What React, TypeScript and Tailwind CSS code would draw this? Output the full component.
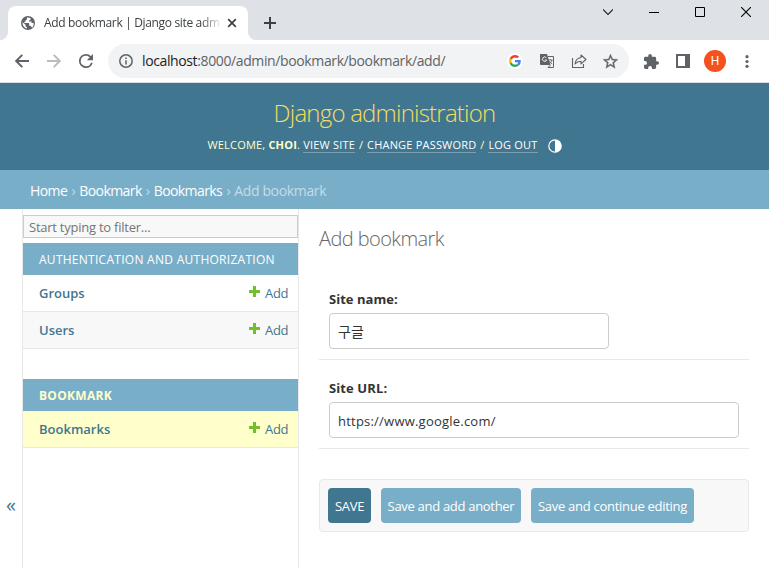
import React from "react";

const TabBar = () => (
  <div className="flex h-10 bg-[#dee1e6]">
    <div className="flex w-2 items-end">
      <svg width="8" height="8" viewBox="0 0 8 8"><path d="M8 0A8 8 0 0 1 0 8H8Z" fill="#fff" /></svg>
    </div>
    <div className="mt-1.5 flex w-60 items-center rounded-t-lg bg-white pl-[13px] text-[#3c4043]">
      <svg className="shrink-0" width="14" height="14" viewBox="2 2 20 20">
        <circle cx="12" cy="12" r="10" fill="#5f6368" />
        <path d="M4.2 11l4.3 3.6v1.2c0 1 .8 1.8 1.9 1.8v2.3A8 8 0 0 1 4.2 11Zm6.3-6.8v2.2c0 1-.9 1.7-2 1.7v2H6.700v2h6c.6 0 1 .4 1 1v2.800h1c.9 0 1.600.6 1.900 1.400l2 1A8 8 0 0 0 20 12h-3v-2h-3.500V8h2V5a8 8 0 0 0-5-.8Z" fill="#fff" />
      </svg>
      <span className="ml-[9px] w-[176px] whitespace-nowrap text-[12px] leading-5 tracking-[-0.34px] [mask-image:linear-gradient(to_right,black_157px,transparent_178px)]">
        Add bookmark | Django site adm
      </span>
      <svg className="ml-[7px] shrink-0" width="10" height="10" viewBox="0 0 10 10"><path d="M1.200 1.200l7.600 7.600M8.800 1.200L1.200 8.800" stroke="#3c4043" strokeWidth="1.700" /></svg>
    </div>
    <div className="flex w-2 items-end">
      <svg width="8" height="8" viewBox="0 0 8 8"><path d="M0 0A8 8 0 0 0 8 8H0Z" fill="#fff" /></svg>
    </div>
    <svg className="ml-[8px] mt-[17px]" width="12" height="12" viewBox="0 0 12 12"><path d="M6 0v12M0 6h12" stroke="#3c4043" strokeWidth="2" /></svg>
    <div className="ml-auto flex gap-9 pr-[18px] pt-[7px]">
      <svg width="10" height="10" viewBox="0 0 10 10"><path d="M0 2.500l5 5 5-5" fill="none" stroke="#222" strokeWidth="1.100" /></svg>
      <svg width="10" height="10" viewBox="0 0 10 10"><path d="M0 5.500h10" stroke="#000" /></svg>
      <svg width="10" height="10" viewBox="0 0 10 10"><path d="M.5.5h9v9h-9z" fill="none" stroke="#000" /></svg>
      <svg width="10" height="10" viewBox="0 0 10 10"><path d="M0 0l10 10M10 0L0 10" stroke="#000" strokeWidth="1.100" /></svg>
    </div>
  </div>
);

const GoogleG = () => (
  <span className="flex size-4 items-center justify-center rounded-full bg-white">
    <svg width="12" height="12" viewBox="0 0 48 48">
      <path fill="#EA4335" d="M24 9.500c3.540 0 6.710 1.220 9.210 3.600l6.850-6.850C35.900 2.380 30.470 0 24 0 14.620 0 6.510 5.380 2.560 13.220l7.980 6.190C12.430 13.720 17.740 9.500 24 9.500z" />
      <path fill="#4285F4" d="M46.980 24.550c0-1.570-.15-3.090-.38-4.550H24v9.020h12.940c-.58 2.960-2.260 5.480-4.780 7.180l7.730 6c4.510-4.180 7.090-10.360 7.090-17.650z" />
      <path fill="#FBBC05" d="M10.530 28.590A14.500 14.500 0 0 1 9.770 24c0-1.600.27-3.140.76-4.590l-7.980-6.190A23.900 23.900 0 0 0 0 24c0 3.880.92 7.540 2.560 10.780l7.970-6.190z" />
      <path fill="#34A853" d="M24 48c6.480 0 11.930-2.130 15.890-5.810l-7.730-6c-2.150 1.450-4.920 2.300-8.160 2.300-6.260 0-11.570-4.220-13.470-9.910l-7.980 6.190C6.510 42.620 14.620 48 24 48z" />
    </svg>
  </span>
);

const Toolbar = () => (
  <div className="flex h-[43px] items-center border-b border-[#dadce0] bg-white pl-[15px]">
    <svg width="14" height="14" viewBox="0 0 14 14"><path d="M14 7H1.500M7.300.8L1.200 7l6.100 6.200" fill="none" stroke="#5f6368" strokeWidth="1.900" /></svg>
    <svg className="ml-[18px]" width="14" height="14" viewBox="0 0 14 14"><path d="M0 7h12.500M6.700.8L12.800 7l-6.100 6.200" fill="none" stroke="#babcbe" strokeWidth="1.900" /></svg>
    <svg className="ml-[18px]" width="14" height="14" viewBox="4 4 16 16"><path fill="#5f6368" d="M17.650 6.350A7.960 7.960 0 0 0 12 4a8 8 0 1 0 7.730 10h-2.080A6 6 0 1 1 12 6c1.660 0 3.140.69 4.220 1.780L13 11h7V4l-2.350 2.350z" /></svg>
    <div className="ml-[15px] flex h-[34px] w-[521px] items-center rounded-full bg-[#f1f3f4] pl-[11px] text-[#5f6368]">
      <svg width="14" height="14" viewBox="0 0 14 14"><circle cx="7" cy="7" r="6.200" fill="none" stroke="#5f6368" strokeWidth="1.500" /><path d="M7 6.200v4.300M7 3.500v1.600" stroke="#5f6368" strokeWidth="1.500" /></svg>
      <span className="ml-[9px] whitespace-nowrap text-[14px] leading-5 tracking-[-0.38px]"><span className="text-[#202124]">localhost</span>:8000/admin/bookmark/bookmark/add/</span>
      <div className="ml-auto flex items-center pr-[11px]">
        <GoogleG />
        <svg className="ml-[17px]" width="14" height="14" viewBox="0 0 14 14">
          <path d="M0 0h7l3.500 11H1a1 1 0 0 1-1-1z" fill="#5f6368" />
          <path d="M8 2.500h5.500v11H8l2.500-2.500" fill="none" stroke="#5f6368" />
          <path d="M6.300 3.700A2.200 2.200 0 1 0 6.700 6H4.800" fill="none" stroke="#fff" strokeWidth=".9" />
          <path d="M8.600 6h4M10.600 5v1m1.400 0c-.5 2-1.500 3-2.600 4m0-3c.6 1.200 1.500 2.200 2.800 3" fill="none" stroke="#5f6368" strokeWidth=".8" />
        </svg>
        <svg className="ml-[17px]" width="16" height="14" viewBox="0 0 16 14">
          <path d="M1.500 4v9.500h11V10" fill="none" stroke="#5f6368" strokeWidth="1.100" />
          <path d="M10 1l5 4.500-5 4.300V7.300C7.500 7.300 5.500 8.200 4 10c.4-3.500 2.500-6 6-6.500z" fill="none" stroke="#5f6368" strokeWidth="1.100" strokeLinejoin="round" />
        </svg>
        <svg className="ml-[16px]" width="15" height="15" viewBox="2 2 20 20"><path fill="#5f6368" stroke="#5f6368" strokeWidth=".4" d="M22 9.240l-7.190-.62L12 2 9.190 8.630 2 9.240l5.460 4.730L5.820 21 12 17.270 18.180 21l-1.630-7.030L22 9.240zM12 15.400l-3.760 2.270 1-4.280-3.320-2.880 4.380-.38L12 6.100l1.710 4.040 4.380.38-3.320 2.880 1 4.280L12 15.400z" /></svg>
      </div>
    </div>
    <svg className="ml-[15px]" width="15" height="15" viewBox="2 1 21 21"><path fill="#5f6368" d="M20.500 11H19V7a2 2 0 0 0-2-2h-4V3.500a2.500 2.500 0 0 0-5 0V5H4a2 2 0 0 0-2 2v3.800h1.500a2.700 2.700 0 0 1 0 5.400H2V20a2 2 0 0 0 2 2h3.800v-1.500a2.700 2.700 0 0 1 5.400 0V22H17a2 2 0 0 0 2-2v-4h1.500a2.500 2.500 0 0 0 0-5z" /></svg>
    <svg className="ml-[17px]" width="14" height="14" viewBox="0 0 14 14"><path fill="#5f6368" fillRule="evenodd" d="M0 0h14v14H0zM2 2v10h7V2z" /></svg>
    <span className="ml-[14px] flex size-[22px] items-center justify-center rounded-full bg-[#f4511e] font-[Roboto] text-[12px] text-white">H</span>
    <svg className="ml-[19px]" width="4" height="13" viewBox="0 0 4 13"><g fill="#5f6368"><circle cx="2" cy="1.700" r="1.600" /><circle cx="2" cy="6.500" r="1.600" /><circle cx="2" cy="11.300" r="1.600" /></g></svg>
  </div>
);

const Header = () => (
  <header className="flex h-[87px] flex-col items-center bg-[#417690] text-[#ffffcc]">
    <h1 className="mt-[14px] whitespace-nowrap text-[24px] font-light leading-8 tracking-[-0.78px] text-[#f5dd5d]">Django administration</h1>
    <div className="mt-[8px] flex h-4 items-start whitespace-pre text-[11px] font-medium leading-4 tracking-[0.2px]">
      <span>WELCOME, </span><b>CHOI</b><span>. </span>
      <a className="h-4 border-b border-white/30 text-white">VIEW SITE</a><span className="w-3 text-center">/</span>
      <a className="h-4 border-b border-white/30 text-white">CHANGE PASSWORD</a><span className="w-3 text-center">/</span>
      <a className="h-4 border-b border-white/30 font-normal text-white">LOG OUT</a>
      <svg className="ml-[10px] mt-[2px]" width="14" height="14" viewBox="0 0 14 14"><circle cx="7" cy="7" r="6.200" fill="none" stroke="#fff" strokeWidth="1.200" /><path d="M7 .8a6.200 6.200 0 0 1 0 12.400z" fill="#fff" /></svg>
    </div>
  </header>
);

const Crumb = ({ label }: { label: string }) => (
  <>
    <span className="font-medium text-white">{label}</span>
    <span className="w-3 text-center">›</span>
  </>
);

const Breadcrumbs = () => (
  <div className="flex h-[39px] items-center whitespace-nowrap bg-[#79aec8] pl-[30px] pt-px text-[14px] tracking-[-0.58px] text-[#c4dce8]">
    <Crumb label="Home" />
    <Crumb label="Bookmark" />
    <Crumb label="Bookmarks" />
    <span className="tracking-[-0.35px]">Add bookmark</span>
  </div>
);

const ModelRow = ({ name, tone }: { name: string; tone: string }) => (
  <div className={"flex h-[37px] items-center border-b border-[#e8e8e8] pl-4 pr-[10px] pt-[2px] text-[13px] text-[#417690] " + tone}>
    <span className="font-semibold">{name}</span>
    <svg className="mb-[5px] ml-auto" width="11" height="11" viewBox="0 0 11 11"><path d="M5.500 0v11M0 5.500h11" stroke="#70bf2b" strokeWidth="3" /></svg>
    <span className="ml-[5px] w-[23px] tracking-[-0.3px]">Add</span>
  </div>
);

const Sidebar = () => (
  <nav className="w-[277px] border-x border-[#e8e8e8] pt-[6px]">
    <div className="flex h-[23px] items-center border border-[#ccc] bg-[#f8f8f8] pl-[5px] pt-[2px] text-[13px] tracking-[-0.24px] text-[#757575]">Start typing to filter...</div>
    <div className="mt-[5px] flex h-8 items-center bg-[#79aec8] pl-4 pt-[2px] text-[12px] tracking-[0.27px] text-white"><span className="whitespace-nowrap">AUTHENTICATION AND AUTHORIZATION</span></div>
    <ModelRow name="Groups" tone="bg-white" />
    <ModelRow name="Users" tone="bg-[#f8f8f8]" />
    <div className="mt-[30px] flex h-8 items-center bg-[#79aec8] pl-4 pt-[2px] text-[12px] font-bold tracking-[0.3px] text-[#ffffcc]">BOOKMARK</div>
    <ModelRow name="Bookmarks" tone="bg-[#ffffcc]" />
  </nav>
);

const Content = () => (
  <main className="flex w-[470px] flex-col pl-5 pr-5 pt-[16px]">
    <h2 className="h-[27px] whitespace-nowrap text-[20px] font-light leading-[27px] tracking-[-0.58px] text-[#666]">Add bookmark</h2>
    <div className="mt-[37px] h-[71px] border-b border-[#e8e8e8] px-[10px]">
      <div className="h-[24px] text-[13px] font-bold leading-5 tracking-[0.03px] text-[#333]">Site name:</div>
      <div className="flex h-9 w-[280px] items-center rounded border border-[#ccc] pl-2 text-[14px] text-[#333]">구글</div>
    </div>
    <div className="mt-[18px] h-[71px] border-b border-[#e8e8e8] px-[10px]">
      <div className="h-[24px] text-[13px] font-bold leading-5 tracking-[0.1px] text-[#333]">Site URL:</div>
      <div className="flex h-9 w-[410px] items-center rounded border border-[#ccc] pl-2 pt-[3px] text-[13px] tracking-[0.22px] text-[#333]">https://www.google.com/</div>
    </div>
    <div className="mt-[30px] flex h-[53px] items-center gap-[10px] whitespace-nowrap rounded border border-[#e8e8e8] bg-[#f8f8f8] pl-2 text-[13px] text-white">
      <button className="h-[35px] w-[43px] rounded bg-[#417690] pt-[2px] tracking-[-0.3px]">SAVE</button>
      <button className="h-[35px] w-[140px] rounded bg-[#79aec8] pt-[2px] tracking-[-0.3px]">Save and add another</button>
      <button className="h-[35px] w-[163px] rounded bg-[#79aec8] pt-[2px] tracking-[-0.28px]">Save and continue editing</button>
    </div>
  </main>
);

export default function App() {
  return (
    <div className="flex h-[568px] w-[769px] flex-col overflow-hidden bg-white font-['Open_Sans','Noto_Sans_CJK_KR',sans-serif]">
      <TabBar />
      <Toolbar />
      <Header />
      <Breadcrumbs />
      <div className="flex flex-1">
        <div className="w-[22px] pl-[6px] pt-[284px] text-[20px] leading-6 text-[#417690]">«</div>
        <Sidebar />
        <Content />
      </div>
    </div>
  );
}
